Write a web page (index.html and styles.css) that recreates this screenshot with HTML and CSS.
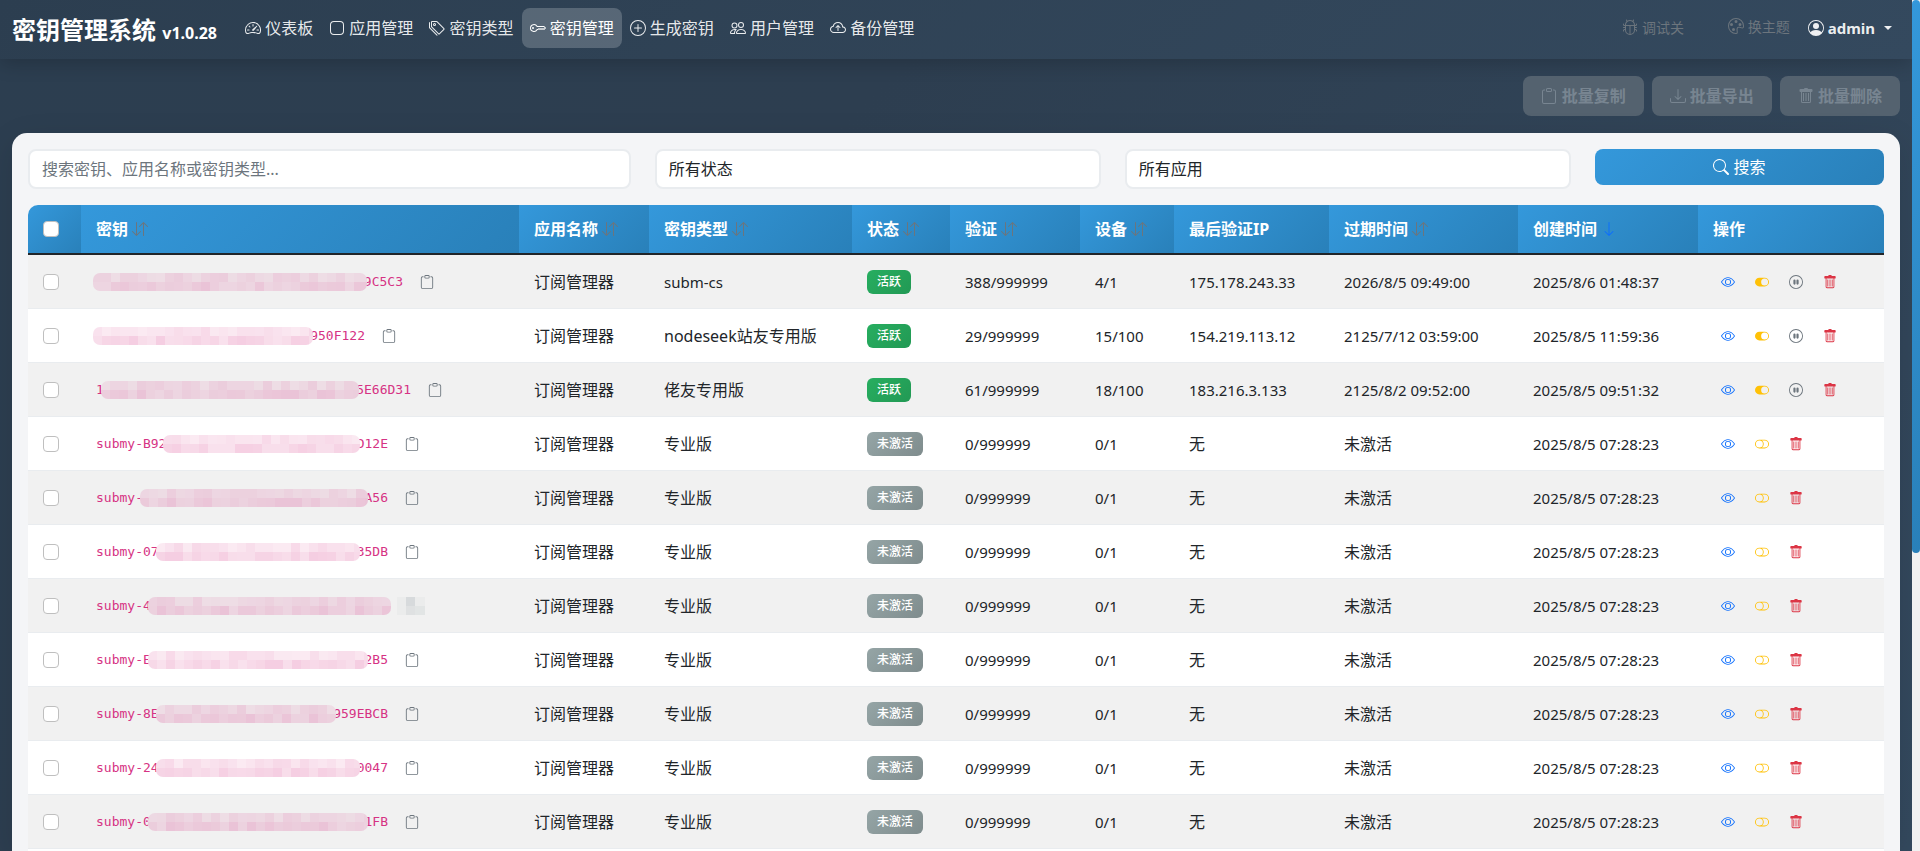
FILE: index.html
```
<!DOCTYPE html>
<html lang="zh-CN">
<head>
<meta charset="utf-8">
<title>密钥管理系统</title>
<link rel="stylesheet" href="styles.css">
</head>
<body>
<svg class="sprite" aria-hidden="true">
  <symbol id="i-speed" viewBox="0 0 16 16"><path d="M8 4a.5.5 0 0 1 .5.5V6a.5.5 0 0 1-1 0V4.5A.5.5 0 0 1 8 4M3.732 5.732a.5.5 0 0 1 .707 0l.915.914a.5.5 0 1 1-.708.708l-.914-.915a.5.5 0 0 1 0-.707M2 10a.5.5 0 0 1 .5-.5h1.586a.5.5 0 0 1 0 1H2.5A.5.5 0 0 1 2 10m9.5 0a.5.5 0 0 1 .5-.5h1.5a.5.5 0 0 1 0 1H12a.5.5 0 0 1-.5-.5m.754-4.246a.39.39 0 0 0-.527-.02L7.547 9.31a.91.91 0 1 0 1.302 1.258l3.434-4.297a.39.39 0 0 0-.029-.518z"/><path fill-rule="evenodd" d="M0 10a8 8 0 1 1 15.547 2.661c-.442 1.253-1.845 1.602-2.932 1.25C11.309 13.488 9.475 13 8 13c-1.474 0-3.31.488-4.615.911-1.087.352-2.49.003-2.932-1.25A8 8 0 0 1 0 10m8-7a7 7 0 0 0-6.603 9.329c.203.575.923.876 1.68.63C4.397 12.533 6.358 12 8 12s3.604.532 4.923.96c.757.245 1.477-.056 1.68-.631A7 7 0 0 0 8 3"/></symbol>
  <symbol id="i-app" viewBox="0 0 16 16"><path d="M11 2a3 3 0 0 1 3 3v6a3 3 0 0 1-3 3H5a3 3 0 0 1-3-3V5a3 3 0 0 1 3-3zM5 1a4 4 0 0 0-4 4v6a4 4 0 0 0 4 4h6a4 4 0 0 0 4-4V5a4 4 0 0 0-4-4z"/></symbol>
  <symbol id="i-tags" viewBox="0 0 16 16"><path d="M3 2v4.586l7 7L14.586 9l-7-7zM2 2a1 1 0 0 1 1-1h4.586a1 1 0 0 1 .707.293l7 7a1 1 0 0 1 0 1.414l-4.586 4.586a1 1 0 0 1-1.414 0l-7-7A1 1 0 0 1 2 6.586z"/><path d="M5.5 5a.5.5 0 1 1 0-1 .5.5 0 0 1 0 1m0 1a1.5 1.5 0 1 0 0-3 1.5 1.5 0 0 0 0 3M1 7.086a1 1 0 0 0 .293.707L8.75 15.25l-.043.043a1 1 0 0 1-1.414 0l-7-7A1 1 0 0 1 0 7.586V3a1 1 0 0 1 1-1z"/></symbol>
  <symbol id="i-key" viewBox="0 0 16 16"><path d="M0 8a4 4 0 0 1 7.465-2H14a.5.5 0 0 1 .354.146l1.5 1.5a.5.5 0 0 1 0 .708l-1.5 1.5a.5.5 0 0 1-.708 0L13 9.207l-.646.647a.5.5 0 0 1-.708 0L11 9.207l-.646.647a.5.5 0 0 1-.708 0L9 9.207l-.646.647A.5.5 0 0 1 8 10h-.535A4 4 0 0 1 0 8m4-3a3 3 0 1 0 2.712 4.285A.5.5 0 0 1 7.163 9h.63l.853-.854a.5.5 0 0 1 .708 0l.646.647.646-.647a.5.5 0 0 1 .708 0l.646.647.646-.647a.5.5 0 0 1 .708 0l.646.647.793-.793-1-1h-6.63a.5.5 0 0 1-.451-.285A3 3 0 0 0 4 5"/><path d="M4 8a1 1 0 1 1-2 0 1 1 0 0 1 2 0"/></symbol>
  <symbol id="i-plus" viewBox="0 0 16 16"><path d="M8 15A7 7 0 1 1 8 1a7 7 0 0 1 0 14m0 1A8 8 0 1 0 8 0a8 8 0 0 0 0 16"/><path d="M8 4a.5.5 0 0 1 .5.5v3h3a.5.5 0 0 1 0 1h-3v3a.5.5 0 0 1-1 0v-3h-3a.5.5 0 0 1 0-1h3v-3A.5.5 0 0 1 8 4"/></symbol>
  <symbol id="i-people" viewBox="0 0 16 16"><path d="M15 14s1 0 1-1-1-4-5-4-5 3-5 4 1 1 1 1zm-7.978-1L7 12.996c.001-.264.167-1.03.76-1.72C8.312 10.629 9.282 10 11 10c1.717 0 2.687.63 3.24 1.276.593.69.758 1.457.76 1.72l-.008.002-.014.002zM11 7a2 2 0 1 0 0-4 2 2 0 0 0 0 4m3-2a3 3 0 1 1-6 0 3 3 0 0 1 6 0M6.936 9.28a6 6 0 0 0-1.23-.247A7 7 0 0 0 5 9c-4 0-5 3-5 4q0 1 1 1h4.216A2.24 2.24 0 0 1 5 13c0-1.01.377-2.042 1.09-2.904.243-.294.526-.569.846-.816M4.92 10A5.5 5.5 0 0 0 4 13H1c0-.26.164-1.03.76-1.724.545-.636 1.492-1.256 3.16-1.275ZM1.5 5.5a3 3 0 1 1 6 0 3 3 0 0 1-6 0m3-2a2 2 0 1 0 0 4 2 2 0 0 0 0-4"/></symbol>
  <symbol id="i-cloud" viewBox="0 0 16 16"><path fill-rule="evenodd" d="M7.646 5.146a.5.5 0 0 1 .708 0l2 2a.5.5 0 0 1-.708.708L8.5 6.707V10.5a.5.5 0 0 1-1 0V6.707L6.354 7.854a.5.5 0 1 1-.708-.708z"/><path d="M4.406 3.342A5.53 5.53 0 0 1 8 2c2.69 0 4.923 2 5.166 4.579C14.758 6.804 16 8.137 16 9.773 16 11.569 14.502 13 12.687 13H3.781C1.708 13 0 11.366 0 9.318c0-1.763 1.266-3.223 2.942-3.593.143-.863.698-1.723 1.464-2.383m.653.757c-.757.653-1.153 1.44-1.153 2.056v.448l-.445.049C2.064 6.805 1 7.952 1 9.318 1 10.785 2.23 12 3.781 12h8.906C13.98 12 15 10.988 15 9.773c0-1.216-1.02-2.228-2.313-2.228h-.5v-.5C12.188 4.825 10.328 3 8 3a4.53 4.53 0 0 0-2.941 1.1z"/></symbol>
  <symbol id="i-bug" viewBox="0 0 16 16"><path d="M4.355.522a.5.5 0 0 1 .623.333l.291.956A5 5 0 0 1 8 1c1.007 0 1.946.298 2.731.811l.29-.956a.5.5 0 1 1 .957.29l-.41 1.352A5 5 0 0 1 13 6h.5a.5.5 0 0 0 .5-.5V5a.5.5 0 0 1 1 0v.5A1.5 1.5 0 0 1 13.5 7H13v1h1.5a.5.5 0 0 1 0 1H13v1h.5a1.5 1.5 0 0 1 1.5 1.5v.5a.5.5 0 1 1-1 0v-.5a.5.5 0 0 0-.5-.5H13a5 5 0 0 1-10 0h-.5a.5.5 0 0 0-.5.5v.5a.5.5 0 1 1-1 0v-.5A1.5 1.5 0 0 1 2.5 10H3V9H1.5a.5.5 0 0 1 0-1H3V7h-.5A1.5 1.5 0 0 1 1 5.5V5a.5.5 0 0 1 1 0v.5a.5.5 0 0 0 .5.5H3c0-1.364.547-2.601 1.432-3.503l-.41-1.352a.5.5 0 0 1 .333-.623M4 7v4a4 4 0 0 0 3.5 3.97V7zm4.5 0v7.97A4 4 0 0 0 12 11V7zM12 6a4 4 0 0 0-1.334-2.982A3.98 3.98 0 0 0 8 2a3.98 3.98 0 0 0-2.667 1.018A4 4 0 0 0 4 6z"/></symbol>
  <symbol id="i-palette" viewBox="0 0 16 16"><path d="M8 5a1.5 1.5 0 1 0 0-3 1.5 1.5 0 0 0 0 3m4 3a1.5 1.5 0 1 0 0-3 1.5 1.5 0 0 0 0 3M5 6.5a1.5 1.5 0 1 1-3 0 1.5 1.5 0 0 1 3 0m.5 6.5a1.5 1.5 0 1 0 0-3 1.5 1.5 0 0 0 0 3"/><path d="M16 8c0 3.15-1.866 2.585-3.567 2.07C11.42 9.763 10.465 9.473 10 10c-.603.683-.475 1.819-.351 2.92C9.826 14.495 9.996 16 8 16a8 8 0 1 1 8-8m-8 7c.611 0 .654-.171.655-.176.078-.146.124-.464.07-1.119-.014-.168-.037-.37-.061-.591-.052-.464-.112-1.005-.118-1.462-.01-.707.083-1.61.704-2.314.369-.417.845-.578 1.272-.618.404-.038.812.026 1.16.104.343.077.702.186 1.025.284l.028.008c.346.105.658.199.953.266.653.148.904.083.991.024C14.717 9.38 15 9.161 15 8a7 7 0 1 0-7 7"/></symbol>
  <symbol id="i-person" viewBox="0 0 16 16"><path d="M11 6a3 3 0 1 1-6 0 3 3 0 0 1 6 0"/><path fill-rule="evenodd" d="M0 8a8 8 0 1 1 16 0A8 8 0 0 1 0 8m8-7a7 7 0 0 0-5.468 11.37C3.242 11.226 4.805 10 8 10s4.757 1.225 5.468 2.37A7 7 0 0 0 8 1"/></symbol>
  <symbol id="i-clipboard" viewBox="0 0 16 16"><path d="M4 1.5H3a2 2 0 0 0-2 2V14a2 2 0 0 0 2 2h10a2 2 0 0 0 2-2V3.5a2 2 0 0 0-2-2h-1v1h1a1 1 0 0 1 1 1V14a1 1 0 0 1-1 1H3a1 1 0 0 1-1-1V3.5a1 1 0 0 1 1-1h1z"/><path d="M9.5 1a.5.5 0 0 1 .5.5v1a.5.5 0 0 1-.5.5h-3a.5.5 0 0 1-.5-.5v-1a.5.5 0 0 1 .5-.5zm-3-1A1.5 1.5 0 0 0 5 1.5v1A1.5 1.5 0 0 0 6.5 4h3A1.5 1.5 0 0 0 11 2.5v-1A1.5 1.5 0 0 0 9.5 0z"/></symbol>
  <symbol id="i-download" viewBox="0 0 16 16"><path d="M.5 9.9a.5.5 0 0 1 .5.5v2.5a1 1 0 0 0 1 1h12a1 1 0 0 0 1-1v-2.5a.5.5 0 0 1 1 0v2.5a2 2 0 0 1-2 2H2a2 2 0 0 1-2-2v-2.5a.5.5 0 0 1 .5-.5"/><path d="M7.646 11.854a.5.5 0 0 0 .708 0l3-3a.5.5 0 0 0-.708-.708L8.5 10.293V1.5a.5.5 0 0 0-1 0v8.793L5.354 8.146a.5.5 0 1 0-.708.708z"/></symbol>
  <symbol id="i-trash" viewBox="0 0 16 16"><path d="M5 5h1v8H5zM7.500 5h1v8h-1zM10 5h1v8h-1z"/><path fill-rule="evenodd" d="M14.500 3a1 1 0 0 1-1 1H13v9.500a1.500 1.500 0 0 1-1.500 1.500h-7A1.500 1.500 0 0 1 3 13.500V4h-.500a1 1 0 0 1-1-1V2a1 1 0 0 1 1-1H6a1 1 0 0 1 1-1h2a1 1 0 0 1 1 1h3.500a1 1 0 0 1 1 1zM4 4v9.500a.5.5 0 0 0 .5.5h7a.5.5 0 0 0 .5-.5V4z"/></symbol>
  <symbol id="i-search" viewBox="0 0 16 16"><path d="M11.742 10.344a6.5 6.5 0 1 0-1.397 1.398h-.001q.044.06.098.115l3.85 3.85a1 1 0 0 0 1.415-1.414l-3.85-3.85a1 1 0 0 0-.115-.1zM12 6.5a5.5 5.5 0 1 1-11 0 5.5 5.5 0 0 1 11 0"/></symbol>
  <symbol id="i-sort" viewBox="0 0 16 16"><path d="M11.5 15a.5.5 0 0 0 .5-.5V2.707l3.146 3.147a.5.5 0 0 0 .708-.708l-4-4a.5.5 0 0 0-.708 0l-4 4a.5.5 0 1 0 .708.708L11 2.707V14.5a.5.5 0 0 0 .5.5m-7-14a.5.5 0 0 1 .5.5v11.793l3.146-3.147a.5.5 0 0 1 .708.708l-4 4a.5.5 0 0 1-.708 0l-4-4a.5.5 0 0 1 .708-.708L4 13.293V1.5a.5.5 0 0 1 .5-.5"/></symbol>
  <symbol id="i-down" viewBox="0 0 16 16"><path d="M8 1a.5.5 0 0 1 .5.5v11.793l3.146-3.147a.5.5 0 0 1 .708.708l-4 4a.5.5 0 0 1-.708 0l-4-4a.5.5 0 0 1 .708-.708L7.5 13.293V1.5A.5.5 0 0 1 8 1"/></symbol>
  <symbol id="i-eye" viewBox="0 0 16 16"><path d="M16 8s-3-5.500-8-5.500S0 8 0 8s3 5.500 8 5.500S16 8 16 8M1.173 8a13 13 0 0 1 1.660-2.043C4.120 4.668 5.880 3.500 8 3.500s3.879 1.168 5.168 2.457A13 13 0 0 1 14.828 8q-.086.130-.195.288c-.335.480-.830 1.120-1.465 1.755C11.879 11.332 10.119 12.500 8 12.500s-3.879-1.168-5.168-2.457A13 13 0 0 1 1.172 8z"/><path d="M8 5.500a2.500 2.500 0 1 0 0 5 2.500 2.500 0 0 0 0-5M4.500 8a3.500 3.500 0 1 1 7 0 3.500 3.500 0 0 1-7 0"/></symbol>
  <symbol id="i-on" viewBox="0 0 16 16"><path d="M5 3a5 5 0 0 0 0 10h6a5 5 0 0 0 0-10zm6 9a4 4 0 1 1 0-8 4 4 0 0 1 0 8"/></symbol>
  <symbol id="i-off" viewBox="0 0 16 16"><path d="M11 4a4 4 0 0 1 0 8H8a5 5 0 0 0 2-4 5 5 0 0 0-2-4zm-6 8a4 4 0 1 1 0-8 4 4 0 0 1 0 8M0 8a5 5 0 0 0 5 5h6a5 5 0 0 0 0-10H5a5 5 0 0 0-5 5"/></symbol>
  <symbol id="i-pause" viewBox="0 0 16 16"><path d="M8 15A7 7 0 1 1 8 1a7 7 0 0 1 0 14m0 1A8 8 0 1 0 8 0a8 8 0 0 0 0 16"/><path d="M5 6.250a1.250 1.250 0 1 1 2.500 0v3.500a1.250 1.250 0 1 1-2.500 0zm3.500 0a1.250 1.250 0 1 1 2.500 0v3.500a1.250 1.250 0 1 1-2.500 0z"/></symbol>
</svg>

<div class="shell">
  <div class="page">
    <header class="navbar">
      <a class="brand" href="#">密钥管理系统 <small>v1.0.28</small></a>
      <nav class="nav">
        <a href="#"><svg class="icon"><use href="#i-speed"/></svg> 仪表板</a>
        <a href="#"><svg class="icon"><use href="#i-app"/></svg> 应用管理</a>
        <a href="#"><svg class="icon"><use href="#i-tags"/></svg> 密钥类型</a>
        <a href="#" class="active" aria-current="page"><svg class="icon"><use href="#i-key"/></svg> 密钥管理</a>
        <a href="#"><svg class="icon"><use href="#i-plus"/></svg> 生成密钥</a>
        <a href="#"><svg class="icon"><use href="#i-people"/></svg> 用户管理</a>
        <a href="#"><svg class="icon"><use href="#i-cloud"/></svg> 备份管理</a>
      </nav>
      <div class="tools">
        <button type="button" class="tool debug"><svg class="icon"><use href="#i-bug"/></svg> 调试关</button>
        <button type="button" class="tool theme"><svg class="icon"><use href="#i-palette"/></svg> 换主题</button>
        <button type="button" class="user"><svg class="icon"><use href="#i-person"/></svg> admin<span class="caret"></span></button>
      </div>
    </header>

    <main class="content">
      <div class="batch">
        <button type="button" disabled><svg class="icon"><use href="#i-clipboard"/></svg> 批量复制</button>
        <button type="button" disabled><svg class="icon"><use href="#i-download"/></svg> 批量导出</button>
        <button type="button" disabled><svg class="icon"><use href="#i-trash"/></svg> 批量删除</button>
      </div>

      <section class="card">
        <form class="filters">
          <input class="field wide" type="text" aria-label="搜索" placeholder="搜索密钥、应用名称或密钥类型...">
          <select class="field" aria-label="状态"><option>所有状态</option></select>
          <select class="field" aria-label="应用"><option>所有应用</option></select>
          <button class="search" type="button"><svg class="icon"><use href="#i-search"/></svg> 搜索</button>
        </form>
        <div class="table-wrap">
          <table>
            <colgroup>
              <col class="c-check"><col class="c-key"><col class="c-app"><col class="c-type"><col class="c-status"><col class="c-verify"><col class="c-device"><col class="c-ip"><col class="c-expire"><col class="c-created"><col class="c-ops">
            </colgroup>
            <thead>
              <tr>
                <th><input type="checkbox" aria-label="全选"></th>
                <th>密钥 <svg class="icon sort"><use href="#i-sort"/></svg></th>
                <th>应用名称 <svg class="icon sort"><use href="#i-sort"/></svg></th>
                <th>密钥类型 <svg class="icon sort"><use href="#i-sort"/></svg></th>
                <th>状态 <svg class="icon sort"><use href="#i-sort"/></svg></th>
                <th>验证 <svg class="icon sort"><use href="#i-sort"/></svg></th>
                <th>设备 <svg class="icon sort"><use href="#i-sort"/></svg></th>
                <th>最后验证IP</th>
                <th>过期时间 <svg class="icon sort"><use href="#i-sort"/></svg></th>
                <th>创建时间 <svg class="icon sorted"><use href="#i-down"/></svg></th>
                <th>操作</th>
              </tr>
            </thead>
            <tbody id="rows"></tbody>
          </table>
        </div>
      </section>
    </main>
  </div>
  <div class="scrollbar"><div class="thumb"></div></div>
</div>
<script src="app.js"></script>
</body>
</html>
```

FILE: styles.css
```
* { box-sizing: border-box; }

body {
  margin: 0;
  color: #212529;
  font: 16px/24px "Noto Sans", "Noto Sans CJK SC", sans-serif;
}

button, input, select { font: inherit; margin: 0; }
a { color: inherit; text-decoration: none; }
.sprite { display: none; }
.icon { width: 16px; height: 16px; fill: currentColor; vertical-align: -2px; }

.shell { display: flex; height: 100vh; overflow: hidden; }
.page {
  flex: 1;
  min-width: 0;
  display: flex;
  flex-direction: column;
  background: linear-gradient(135deg, #2c3e50 0%, #2d3e50 35%, #34495e 100%);
}
.scrollbar { width: 8px; background: #f1f1f1; }
.thumb {
  height: 65%;
  border-radius: 4px;
  background: linear-gradient(135deg, #3498db, #2980b9);
}

.navbar {
  display: flex;
  align-items: center;
  padding: 8px 20px 11px 12px;
  background: linear-gradient(135deg, #2c3e50, #34495e);
  box-shadow: 0 4px 20px rgba(0, 0, 0, .2);
  color: #fff;
}
.brand { padding-top: 4px; font-size: 24px; font-weight: 700; line-height: 32px; white-space: nowrap; }
.brand small { font-size: 16px; line-height: 16px; }
.nav { display: flex; flex: 1; margin-left: 20px; color: rgba(255, 255, 255, .9); }
.nav a { padding: 8px; border-radius: 8px; white-space: nowrap; }
.nav .active { background: rgba(255, 255, 255, .2); color: #fff; }
.tools { display: flex; align-items: center; white-space: nowrap; }
.tools button { border: 0; padding: 0; background: none; }
.tool { color: #6c757d; font-size: 14px; line-height: 20px; }
.tools .debug { margin-right: 44px; }
.tools .theme { margin-right: 18px; padding-bottom: 3px; }
.tools .user { color: rgba(255, 255, 255, .92); font-size: 15px; font-weight: 700; }
.caret {
  display: inline-block;
  margin-left: 9px;
  vertical-align: 4px;
  border: 4px solid transparent;
  border-top-color: currentColor;
  border-bottom: 0;
}

.content { flex: 1; display: flex; flex-direction: column; padding: 17px 12px 0; }
.batch { display: flex; justify-content: flex-end; gap: 8px; margin-bottom: 17px; }
.batch button {
  padding: 8px 17px;
  border: 1px solid transparent;
  border-radius: 8px;
  background: #54626f;
  color: #788591;
  font-weight: 700;
  line-height: 22px;
}
.card {
  flex: 1;
  display: flex;
  flex-direction: column;
  padding: 16px 16px 0;
  border-radius: 15px 15px 0 0;
  background: #f4f5f7;
  box-shadow: 0 8px 32px rgba(0, 0, 0, .1);
}
.filters {
  display: grid;
  grid-template-columns: repeat(12, 1fr);
  align-items: start;
  gap: 24px;
  margin-bottom: 16px;
}
.field {
  grid-column: span 3;
  width: 100%;
  height: 40px;
  padding: 0 12px;
  border: 2px solid #e9ecef;
  border-radius: 8px;
  background: #fff;
  color: #212529;
  appearance: none;
}
.field.wide { grid-column: span 4; }
.field::placeholder { color: #6c757d; opacity: 1; }
.search {
  grid-column: span 2;
  height: 36px;
  border: 0;
  border-radius: 8px;
  background: linear-gradient(135deg, #3498db, #2980b9);
  color: #fff;
}

.table-wrap { flex: 1; border-radius: 10px 10px 0 0; overflow: hidden; background: #fff; }
table { width: 100%; table-layout: fixed; border-collapse: separate; border-spacing: 0; }
.c-check { width: 53px; }
.c-key { width: 438px; }
.c-app { width: 130px; }
.c-type { width: 203px; }
.c-status { width: 98px; }
.c-verify { width: 130px; }
.c-device { width: 94px; }
.c-ip { width: 155px; }
.c-expire { width: 189px; }
.c-created { width: 180px; }
.c-ops { width: 186px; }
th, td { padding: 0 15px; text-align: left; vertical-align: middle; white-space: nowrap; }
th {
  height: 50px;
  border-bottom: 2px solid #212529;
  background: linear-gradient(135deg, #3498db, #2980b9) border-box;
  color: #fff;
  font-weight: 700;
}
td { height: 54px; border-bottom: 1px solid #e9ecef; background: var(--row); }
tr { --row: #fff; }
tbody tr:nth-child(odd) { --row: #f1f1f1; }
.sort { color: #6c757d; }
.sorted { color: #0d6efd; }
.latin { font-size: 15px; }

input[type="checkbox"] {
  display: block;
  width: 16px;
  height: 16px;
  border: 1px solid #bfbfbf;
  border-radius: 4px;
  background: #fff;
  appearance: none;
}

.key { display: flex; align-items: center; }
.key code {
  display: flex;
  align-items: center;
  width: 292px;
  color: #d63384;
  font: 13px/18px "DejaVu Sans Mono", monospace;
}
.mosaic {
  position: relative;
  flex: 1;
  width: 0;
  height: 18px;
  margin: 0 -3px;
  border-radius: 7px;
  background: var(--row);
}
.mosaic rect { fill: #d63384; }
.copy { display: flex; padding: 0; margin-left: 17px; border: 0; background: none; color: #6c757d; }
.copy .icon, .ops .icon { display: block; width: 14px; height: 14px; }
.smudge { width: 28px; height: 18px; margin-left: 9px; }

.badge {
  display: block;
  width: fit-content;
  padding: 0 10px;
  border-radius: 6px;
  background: linear-gradient(135deg, #95a5a6, #7f8c8d);
  color: #fff;
  font-size: 12px;
  font-weight: 500;
  line-height: 24px;
}
.badge.on { background: linear-gradient(135deg, #27ae60, #229954); }

.ops { display: flex; gap: 4px; }
.ops button { padding: 8px; border: 0; background: none; }
.view { color: #0d6efd; }
.toggle { color: #ffc107; }
.pause { color: #6c757d; }
.remove { color: #dc3545; }
```

FILE: app.js
```
const INACTIVE = { app: '订阅管理器', type: '专业版', verify: '0/999999', device: '0/1', ip: '无', expire: '未激活', created: '2025/8/5 07:28:23' };
const keys = [
  { head: '', tail: '9C5C3', width: 307, active: true, app: '订阅管理器', type: 'subm-cs', verify: '388/999999', device: '4/1', ip: '175.178.243.33', expire: '2026/8/5 09:49:00', created: '2025/8/6 01:48:37' },
  { head: '', tail: '950F122', width: 269, active: true, app: '订阅管理器', type: 'nodeseek站友专用版', verify: '29/999999', device: '15/100', ip: '154.219.113.12', expire: '2125/7/12 03:59:00', created: '2025/8/5 11:59:36' },
  { head: '1', tail: '5E66D31', width: 315, active: true, app: '订阅管理器', type: '佬友专用版', verify: '61/999999', device: '18/100', ip: '183.216.3.133', expire: '2125/8/2 09:52:00', created: '2025/8/5 09:51:32' },
  { head: 'submy-B92', tail: 'D12E', ...INACTIVE },
  { head: 'submy-', tail: 'A56', ...INACTIVE },
  { head: 'submy-07', tail: '35DB', ...INACTIVE },
  { head: 'submy-4', tail: '', smudge: true, ...INACTIVE },
  { head: 'submy-E', tail: '2B5', ...INACTIVE },
  { head: 'submy-8E', tail: '959EBCB', ...INACTIVE },
  { head: 'submy-24', tail: '0047', ...INACTIVE },
  { head: 'submy-0', tail: '1FB', ...INACTIVE }
];

const icon = name => `<svg class="icon"><use href="#i-${name}"/></svg>`;

// Plain Latin cells use the slightly smaller size.
const cell = text => `<td${/^[\x20-\x7e]+$/.test(text) ? ' class="latin"' : ''}>${text}</td>`;

// Two rows of tinted squares covering the middle of a key.
function mosaic(seed) {
  let state = seed * 7919 + 13;
  let rects = '';
  for (let y = 0; y < 2; y++) {
    for (let x = 0; x < 36; x++) {
      state = (state * 1103515245 + 12345) % 2147483648;
      const alpha = 0.1 + y * 0.05 + Math.floor(state / 65536) % 10 / 100;
      rects += `<rect x="${x * 9}" y="${y * 9}" width="9" height="9" fill-opacity="${alpha.toFixed(2)}"/>`;
    }
  }
  return `<svg class="mosaic" shape-rendering="crispEdges" aria-hidden="true">${rects}</svg>`;
}

const smudge = '<svg class="smudge" aria-hidden="true"><path fill="#ebecec" d="M0 0h28v18H0z"/><path fill="#d7dadc" d="M9 0h9v9H9z"/><path fill="#dfe1e2" d="M9 9h9v9H9z"/><path fill="#e2e5e5" d="M18 9h10v9H18z"/></svg>';

document.getElementById('rows').innerHTML = keys.map((k, i) => `
  <tr>
    <td><input type="checkbox" aria-label="选择"></td>
    <td><div class="key">
      <code${k.width ? ` style="width:${k.width}px"` : ''}><span>${k.head}</span>${mosaic(i + 1)}<span>${k.tail}</span></code>
      ${k.smudge ? smudge : `<button type="button" class="copy" aria-label="复制">${icon('clipboard')}</button>`}
    </div></td>
    ${cell(k.app)}${cell(k.type)}
    <td><span class="badge${k.active ? ' on' : ''}">${k.active ? '活跃' : '未激活'}</span></td>
    ${cell(k.verify)}${cell(k.device)}${cell(k.ip)}${cell(k.expire)}${cell(k.created)}
    <td><div class="ops">
      <button type="button" class="view" aria-label="查看">${icon('eye')}</button>
      <button type="button" class="toggle" aria-label="切换">${icon(k.active ? 'on' : 'off')}</button>
      ${k.active ? `<button type="button" class="pause" aria-label="暂停">${icon('pause')}</button>` : ''}
      <button type="button" class="remove" aria-label="删除">${icon('trash')}</button>
    </div></td>
  </tr>`).join('');
```
